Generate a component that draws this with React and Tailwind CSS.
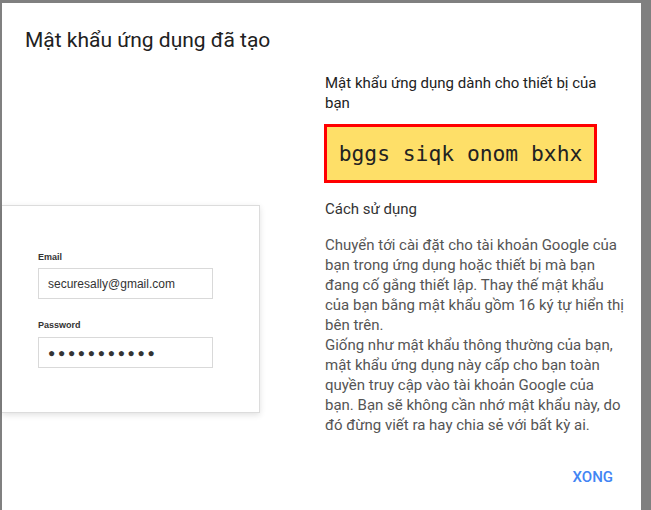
export default function App() {
  return (
    <div className="min-h-[510px] bg-[#808080] pl-[2px] pt-[3px] pr-[10px] overflow-hidden" style={{ fontFamily: 'Roboto, "Noto Sans", sans-serif' }}>
      <div className="w-[639px] h-[520px] bg-white flex flex-col">
        <h1 className="px-[23px] pt-[23px] text-[21px] leading-[28px] text-[#212121] font-normal">Mật khẩu ứng dụng đã tạo</h1>

        <div className="flex">
          <div className="w-[258px] shrink-0 pt-[151px]">
            <div className="bg-white border-y border-r border-[#dcdcdc] shadow-[0_2px_6px_rgba(0,0,0,0.12)] pl-[36px] pt-[45px] pb-[44px]" style={{ fontFamily: '"Liberation Sans", Arial, sans-serif' }}>
              <div className="text-[9px] leading-[12px] font-bold text-[#333] mb-[5px]">Email</div>
              <div className="w-[175px] h-[31px] border border-[#d9d9d9] flex items-center px-[9px] text-[12px] text-[#333]">securesally@gmail.com</div>
              <div className="text-[9px] leading-[12px] font-bold text-[#333] mt-[20px] mb-[6px]">Password</div>
              <div className="w-[175px] h-[31px] border border-[#d9d9d9] flex items-center px-[9px] text-[12px] tracking-[2.7px] text-[#333]">●●●●●●●●●●●</div>
            </div>
          </div>

          <div className="ml-[65px] pt-[19px] w-[300px]">
            <h2 className="text-[15px] leading-[20px] text-[#222] font-normal">Mật khẩu ứng dụng dành cho thiết bị của bạn</h2>
            <div className="mt-[11px] -ml-px w-[273px] h-[59px] bg-[#fedf68] border-[3px] border-[#ff0000] flex items-center justify-center text-[21.3px] text-[#222]" style={{ fontFamily: '"DejaVu Sans Mono", "Liberation Mono", monospace' }}>
              bggs siqk onom bxhx
            </div>
            <h3 className="mt-[16px] text-[15px] leading-[20px] text-[#333] font-normal">Cách sử dụng</h3>
            <p className="mt-[16px] text-[15px] leading-[20px] text-[#555]">
              Chuyển tới cài đặt cho tài khoản Google của bạn trong ứng dụng hoặc thiết bị mà bạn đang cố gắng thiết lập. Thay thế mật khẩu của bạn bằng mật khẩu gồm 16 ký tự hiển thị bên trên.
              <br />
              Giống như mật khẩu thông thường của bạn, mật khẩu ứng dụng này cấp cho bạn toàn quyền truy cập vào tài khoản Google của bạn. Bạn sẽ không cần nhớ mật khẩu này, do đó đừng viết ra hay chia sẻ với bất kỳ ai.
            </p>
          </div>
        </div>

        <div className="flex justify-end pr-[28px] mt-[32px]">
          <button className="text-[15px] leading-[20px] font-medium text-[#4285f4] uppercase">Xong</button>
        </div>
      </div>
    </div>
  )
}
